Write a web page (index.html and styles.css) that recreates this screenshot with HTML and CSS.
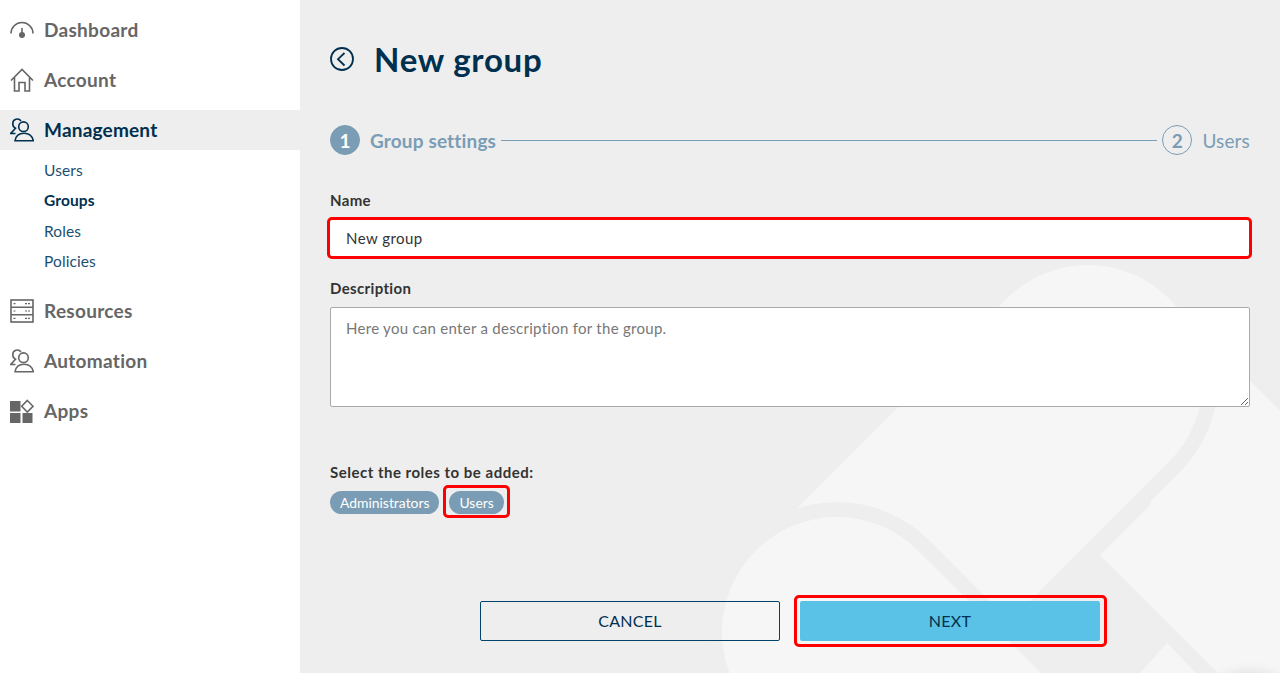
FILE: index.html
```html
<!DOCTYPE html>
<html lang="en">
<head>
<meta charset="utf-8">
<title>New group</title>
<link rel="stylesheet" href="styles.css">
</head>
<body>
<aside class="sidebar">
  <a class="item"><svg class="icon" viewBox="0 0 24 24"><path class="ln" d="M1 15.500A11 11 0 0 1 23 15.500"/><path class="ln" d="M12 10v6"/><circle class="fl" cx="12" cy="17" r="3"/></svg><span>Dashboard</span></a>
  <a class="item"><svg class="icon" viewBox="0 0 24 24"><path class="ln" d="M1 12.500 12 1.500 23 12.500M4.500 9.500V23H9V14.500H15V23H19.500V9.500"/></svg><span>Account</span></a>
  <a class="item active"><svg class="icon" viewBox="0 0 24 24"><circle class="ln" cx="13.500" cy="8.700" r="4.800"/><path class="ln" d="M5 22.800C5.800 17.800 9 15.300 14 15.300S22.300 17.800 23.300 22.800Z"/><path class="ln" d="M11 3A4.500 4.500 0 0 0 2.800 5.800C2.800 7.800 3.800 9.500 5.500 10.300L.7 15.500H5.500"/></svg><span>Management</span></a>
  <nav class="sub">
    <a>Users</a>
    <a class="current">Groups</a>
    <a>Roles</a>
    <a>Policies</a>
  </nav>
  <a class="item"><svg class="icon" viewBox="0 0 24 24"><rect class="ln" x="1" y="1" width="22" height="22"/><path class="ln" d="M1 8.300H23M1 15.700H23"/><path class="thin" d="M3.500 4.700H6M15 4.700H20.500M3.500 12H6M15 12H20.500M3.500 19.300H6M15 19.300H20.500"/></svg><span>Resources</span></a>
  <a class="item"><svg class="icon" viewBox="0 0 24 24"><circle class="ln" cx="13.500" cy="8.700" r="4.800"/><path class="ln" d="M5 22.800C5.800 17.800 9 15.300 14 15.300S22.300 17.800 23.300 22.800Z"/><path class="ln" d="M11 3A4.500 4.500 0 0 0 2.800 5.800C2.800 7.800 3.800 9.500 5.500 10.300L.7 15.500H5.500"/></svg><span>Automation</span></a>
  <a class="item"><svg class="icon" viewBox="0 0 24 24"><rect class="fl" x="0" y="2" width="10.500" height="10.500"/><rect class="fl" x="0" y="14" width="10.500" height="10"/><rect class="fl" x="12.500" y="14" width="10" height="10"/><path class="ln" d="M17.300 1.500 23 7.300 17.300 13 11.700 7.300Z"/></svg><span>Apps</span></a>
</aside>
<main class="main">
  <svg class="watermark" viewBox="0 0 980 673" aria-hidden="true">
    <defs><filter id="soft" x="-50%" y="-100%" width="200%" height="300%"><feGaussianBlur stdDeviation="5"/></filter></defs>
    <path class="wm-light" d="M876 307 980 411V673H918L800 555 850 505Z"/>
    <path class="wm-light" d="M867 643 840 673H896Z"/>
    <path class="wm-gap" d="M788 380 537 631"/>
    <path class="wm-bar" d="M788 380 537 631"/>
    <path class="wm-gap" d="M537 632 900 995"/>
    <path class="wm-bar" d="M537 632 900 995"/>
    <ellipse class="wm-shade" cx="950" cy="680" rx="30" ry="10" filter="url(#soft)"/>
  </svg>
  <div class="content">
    <header class="title-row">
      <svg class="back" viewBox="0 0 24 24"><circle cx="12" cy="12" r="11"/><path d="M14.500 6 8 12.200 14.500 18.500"/></svg>
      <h1>New group</h1>
    </header>
    <div class="stepper">
      <span class="dot on">1</span>
      <span class="step on">Group settings</span>
      <span class="rule"></span>
      <span class="dot">2</span>
      <span class="step">Users</span>
    </div>
    <label class="lbl lbl-name">Name</label>
    <div class="mark mark-field"><input class="input" type="text" value="New group"></div>
    <label class="lbl lbl-desc">Description</label>
    <textarea class="area" placeholder="Here you can enter a description for the group."></textarea>
    <div class="lbl lbl-roles">Select the roles to be added:</div>
    <div class="chips">
      <span class="chip">Administrators</span>
      <span class="chip mark mark-chip">Users</span>
    </div>
    <div class="actions">
      <button class="btn ghost">CANCEL</button>
      <button class="btn primary mark mark-btn">NEXT</button>
    </div>
  </div>
</main>
</body>
</html>
```
FILE: styles.css
```css
* { box-sizing: border-box; }
html, body { height: 100%; }
body {
  margin: 0;
  display: flex;
  height: 673px;
  overflow: hidden;
  font-family: "Lato", "Open Sans", sans-serif;
  background: #eee;
  color: #333;
}
.sidebar {
  width: 300px;
  flex: none;
  background: #fff;
  display: flex;
  flex-direction: column;
}
.item {
  height: 40px;
  margin-top: 10px;
  padding: 0 0 2px 10px;
  display: flex;
  align-items: center;
  gap: 10px;
  font-size: 19px;
  font-weight: 700;
  letter-spacing: 0.3px;
  color: #666;
  --ic: #666;
}
.icon { width: 24px; height: 24px; flex: none; margin-top: 2px; }
.ln { fill: none; stroke: var(--ic); stroke-width: 1.6; }
.thin { fill: none; stroke: var(--ic); stroke-width: 1.2; stroke-dasharray: 2 1; }
.fl { fill: var(--ic); }
.active { background: #eee; color: #00304f; --ic: #00304f; letter-spacing: 0.2px; }
.sub {
  margin-top: 5px;
  padding-left: 44px;
  display: flex;
  flex-direction: column;
  font-size: 15.500px;
  letter-spacing: 0.1px;
  color: #1b4f72;
}
.sub a { height: 30.500px; padding-bottom: 1px; display: flex; align-items: center; }
.sub .current { font-weight: 700; color: #00304f; }
.sub + .item { margin-top: 14px; }

.main {
  position: relative;
  flex: 1;
  min-width: 0;
  overflow: hidden;
  padding: 0 30px;
}
.watermark {
  position: absolute;
  left: 0;
  top: 0;
  width: 980px;
  height: 673px;
}
.wm-light { fill: #f6f6f6; }
.wm-gap { fill: none; stroke: #eee; stroke-width: 260; stroke-linecap: round; }
.wm-bar { fill: none; stroke: #f6f6f6; stroke-width: 230; stroke-linecap: round; }
.wm-shade { fill: #e4e4e4; }
.content { position: relative; display: flex; flex-direction: column; }

.title-row {
  height: 40px;
  margin-top: 40px;
  display: flex;
  align-items: center;
  gap: 20px;
}
.back { width: 24px; height: 24px; flex: none; margin-top: -2px; }
.back circle, .back path { fill: none; stroke: #00304f; stroke-width: 1.800; }
h1 { margin: -2px 0 0; font-size: 33px; font-weight: 700; letter-spacing: 0.75px; color: #00304f; }

.stepper {
  height: 30px;
  margin-top: 45px;
  display: flex;
  align-items: center;
  color: #7a9db5;
  font-size: 19px;
  letter-spacing: 0.15px;
}
.dot {
  width: 30px;
  height: 30px;
  flex: none;
  border-radius: 50%;
  border: 1px solid #7a9db5;
  display: flex;
  align-items: center;
  justify-content: center;
  font-weight: 700;
}
.dot.on { background: #7a9db5; color: #fff; }
.step { margin-left: 10px; }
.step.on { font-weight: 700; }
.rule { flex: 1; height: 1px; background: #7a9db5; margin: 0 5px; }

.lbl { font-size: 15px; font-weight: 700; color: #333; line-height: 18px; letter-spacing: 0.35px; }
.lbl-name { margin-top: 36px; }
.lbl-desc { margin-top: 22px; }
.lbl-roles { margin-top: 56px; letter-spacing: 0.5px; }

.mark { position: relative; }
.mark::after {
  content: "";
  position: absolute;
  border: 3px solid #f00;
  border-radius: 5px;
  pointer-events: none;
}
.mark-field { margin-top: 11px; height: 37px; }
.mark-field::after { inset: -3px -2px -2px -3px; }
.input {
  display: block;
  width: 100%;
  height: 37px;
  border: 0;
  padding: 0 16px 2px;
  background: #fff;
  font: 15px "Lato", sans-serif;
  letter-spacing: 0.45px;
  color: #333;
}
.area {
  display: block;
  width: 100%;
  height: 100px;
  margin-top: 10px;
  padding: 11px 15px;
  border: 1px solid #aaa;
  border-radius: 2px;
  background: #fff;
  font: 15px "Lato", sans-serif;
  letter-spacing: 0.28px;
  color: #333;
}
.area::placeholder { color: #777; opacity: 1; }

.chips { display: flex; gap: 10px; margin-top: 10px; }
.chip {
  height: 23px;
  padding: 0 10px;
  border-radius: 12px;
  background: #7a9db5;
  color: #fff;
  font-size: 13.900px;
  display: flex;
  align-items: center;
}
.mark-chip::after { inset: -6px -6px -4px -6px; }

.actions { display: flex; justify-content: center; gap: 20px; margin-top: 87px; }
.btn {
  width: 300px;
  height: 40px;
  padding: 0 0 2px;
  border-radius: 2px;
  font: 16px "Lato", sans-serif;
  letter-spacing: 0.3px;
  color: #00304f;
}
.ghost { background: transparent; border: 1px solid #00446b; }
.primary { background: #5bc2e7; border: 0; }
.mark-btn::after { inset: -6px -7px -6px -6px; }
```
